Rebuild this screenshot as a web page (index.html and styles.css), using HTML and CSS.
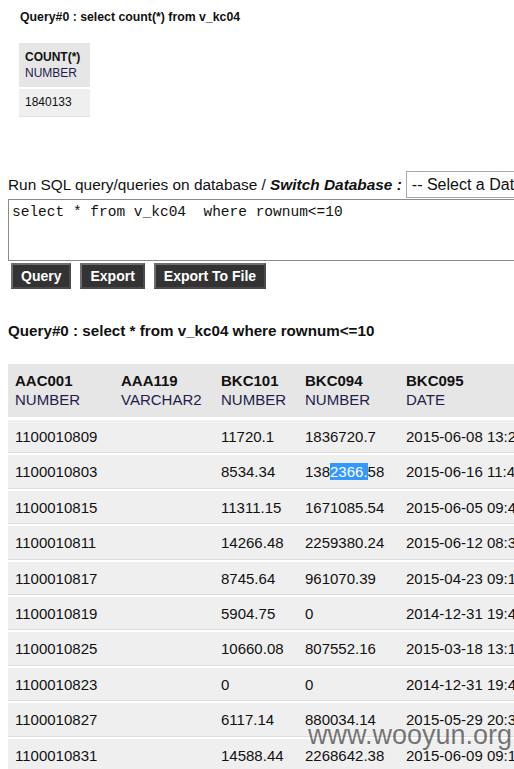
FILE: index.html
```html
<!DOCTYPE html>
<html>
<head>
<meta charset="utf-8">
<link rel="stylesheet" href="styles.css">
</head>
<body>
<div class="page">
  <div class="title-small">Query#0 : select count(*) from v_kc04</div>
  <table class="result small">
    <thead>
      <tr><th><b>COUNT(*)</b><br><span class="type">NUMBER</span></th></tr>
    </thead>
    <tbody>
      <tr><td>1840133</td></tr>
    </tbody>
  </table>

  <div class="runline">
    <span>Run SQL query/queries on database / <b><i>Switch Database :</i></b></span>
    <select class="dbselect"><option>-- Select a Database --</option></select>
  </div>
  <textarea class="sqlbox">select * from v_kc04  where rownum&lt;=10</textarea>
  <div class="buttons">
    <button class="btn">Query</button>
    <button class="btn">Export</button>
    <button class="btn">Export To File</button>
  </div>

  <div class="title-big">Query#0 : select * from v_kc04 where rownum&lt;=10</div>
  <table class="result big">
    <thead>
      <tr>
        <th class="c1"><b>AAC001</b><br><span class="type">NUMBER</span></th>
        <th class="c2"><b>AAA119</b><br><span class="type">VARCHAR2</span></th>
        <th class="c3"><b>BKC101</b><br><span class="type">NUMBER</span></th>
        <th class="c4"><b>BKC094</b><br><span class="type">NUMBER</span></th>
        <th class="c5"><b>BKC095</b><br><span class="type">DATE</span></th>
      </tr>
    </thead>
    <tbody>
      <tr><td>1100010809</td><td></td><td>11720.1</td><td>1836720.7</td><td>2015-06-08 13:20:11</td></tr>
      <tr><td>1100010803</td><td></td><td>8534.34</td><td>138<span class="sel">2366.</span>58</td><td>2015-06-16 11:42:05</td></tr>
      <tr><td>1100010815</td><td></td><td>11311.15</td><td>1671085.54</td><td>2015-06-05 09:40:22</td></tr>
      <tr><td>1100010811</td><td></td><td>14266.48</td><td>2259380.24</td><td>2015-06-12 08:31:47</td></tr>
      <tr><td>1100010817</td><td></td><td>8745.64</td><td>961070.39</td><td>2015-04-23 09:12:36</td></tr>
      <tr><td>1100010819</td><td></td><td>5904.75</td><td>0</td><td>2014-12-31 19:40:00</td></tr>
      <tr><td>1100010825</td><td></td><td>10660.08</td><td>807552.16</td><td>2015-03-18 13:15:09</td></tr>
      <tr><td>1100010823</td><td></td><td>0</td><td>0</td><td>2014-12-31 19:40:00</td></tr>
      <tr><td>1100010827</td><td></td><td>6117.14</td><td>880034.14</td><td>2015-05-29 20:31:52</td></tr>
      <tr><td>1100010831</td><td></td><td>14588.44</td><td>2268642.38</td><td>2015-06-09 09:17:28</td></tr>
    </tbody>
  </table>
  <div class="watermark">www.wooyun.org</div>
</div>
</body>
</html>
```

FILE: styles.css
```css
html, body {
  margin: 0;
  padding: 0;
  overflow: hidden;
  background: #ffffff;
}
body {
  font-family: "Liberation Sans", Arial, sans-serif;
  color: #111111;
}
.page {
  position: relative;
  padding: 8px 0 0 8px;
  width: 700px;
}
.title-small {
  font-size: 12.3px;
  font-weight: bold;
  margin: 2px 0 0 12px;
  line-height: 14px;
}
.result {
  border-collapse: collapse;
  background: #ffffff;
}
.result th {
  background: #e6e6e6;
  text-align: left;
  font-weight: normal;
  vertical-align: top;
}
.result td {
  background: #efefef;
  text-align: left;
  white-space: nowrap;
}
.type {
  color: #221c4a;
}
.small {
  margin: 19px 0 0 11px;
  font-size: 12px;
}
.small th {
  padding: 6px 6px 6px 6px;
  line-height: 16px;
  border-bottom: 2px solid #ffffff;
  width: 59px;
}
.small td {
  padding: 5px 6px 5px 6px;
  line-height: 17px;
  border-bottom: 1px solid #e2e2e2;
}
.runline {
  margin-top: 54px;
  display: flex;
  align-items: center;
  font-size: 15.4px;
  white-space: nowrap;
  height: 27px;
}
.runline b {
  font-weight: bold;
}
.dbselect {
  margin-left: 4px;
  font-family: "Liberation Sans", Arial, sans-serif;
  font-size: 16px;
  height: 27px;
  width: 200px;
  border: 1px solid #a9a9a9;
  background: #ffffff;
  color: #111;
  padding: 0 5px;
  -webkit-appearance: none;
  appearance: none;
  border-radius: 0;
}
.sqlbox {
  display: block;
  margin-top: 1px;
  width: 560px;
  height: 62px;
  box-sizing: border-box;
  border: 1px solid #8a8a8a;
  border-right: none;
  font-family: "Liberation Mono", "Courier New", monospace;
  font-size: 14.5px;
  line-height: 17px;
  padding: 4px 3px;
  resize: none;
  color: #111;
  overflow: hidden;
}
.buttons {
  display: flex;
  gap: 9px;
  margin: 2px 0 0 3px;
}
.btn {
  background: #333333;
  color: #ffffff;
  font-family: "Liberation Sans", Arial, sans-serif;
  font-weight: bold;
  font-size: 14px;
  height: 26px;
  padding: 0 8px;
  border: 2px solid #6e6e6e;
  border-right-color: #4a4a4a;
  border-bottom-color: #4a4a4a;
  border-radius: 0;
}
.title-big {
  margin-top: 33px;
  font-size: 15.2px;
  font-weight: bold;
  line-height: 18px;
}
.big {
  margin-top: 24px;
  font-size: 15px;
}
.big th {
  padding: 7px 7px 8px 7px;
  line-height: 19px;
  border-bottom: 3px solid #ffffff;
}
.big td {
  padding: 8px 7px 8px 7px;
  line-height: 17.4px;
  border-bottom: 2px solid #ffffff;
  box-shadow: inset 0 -1px 0 #dcdcdc;
}
.c1 { width: 92px; }
.c2 { width: 86px; }
.c3 { width: 70px; }
.c4 { width: 87px; }
.c5 { width: 160px; }
.sel {
  background: #3399ff;
  color: #ffffff;
}
.watermark {
  position: absolute;
  left: 308px;
  top: 720px;
  font-family: "Liberation Sans", Arial, sans-serif;
  font-size: 27px;
  color: rgba(30, 30, 30, 0.6);
  pointer-events: none;
}
```
